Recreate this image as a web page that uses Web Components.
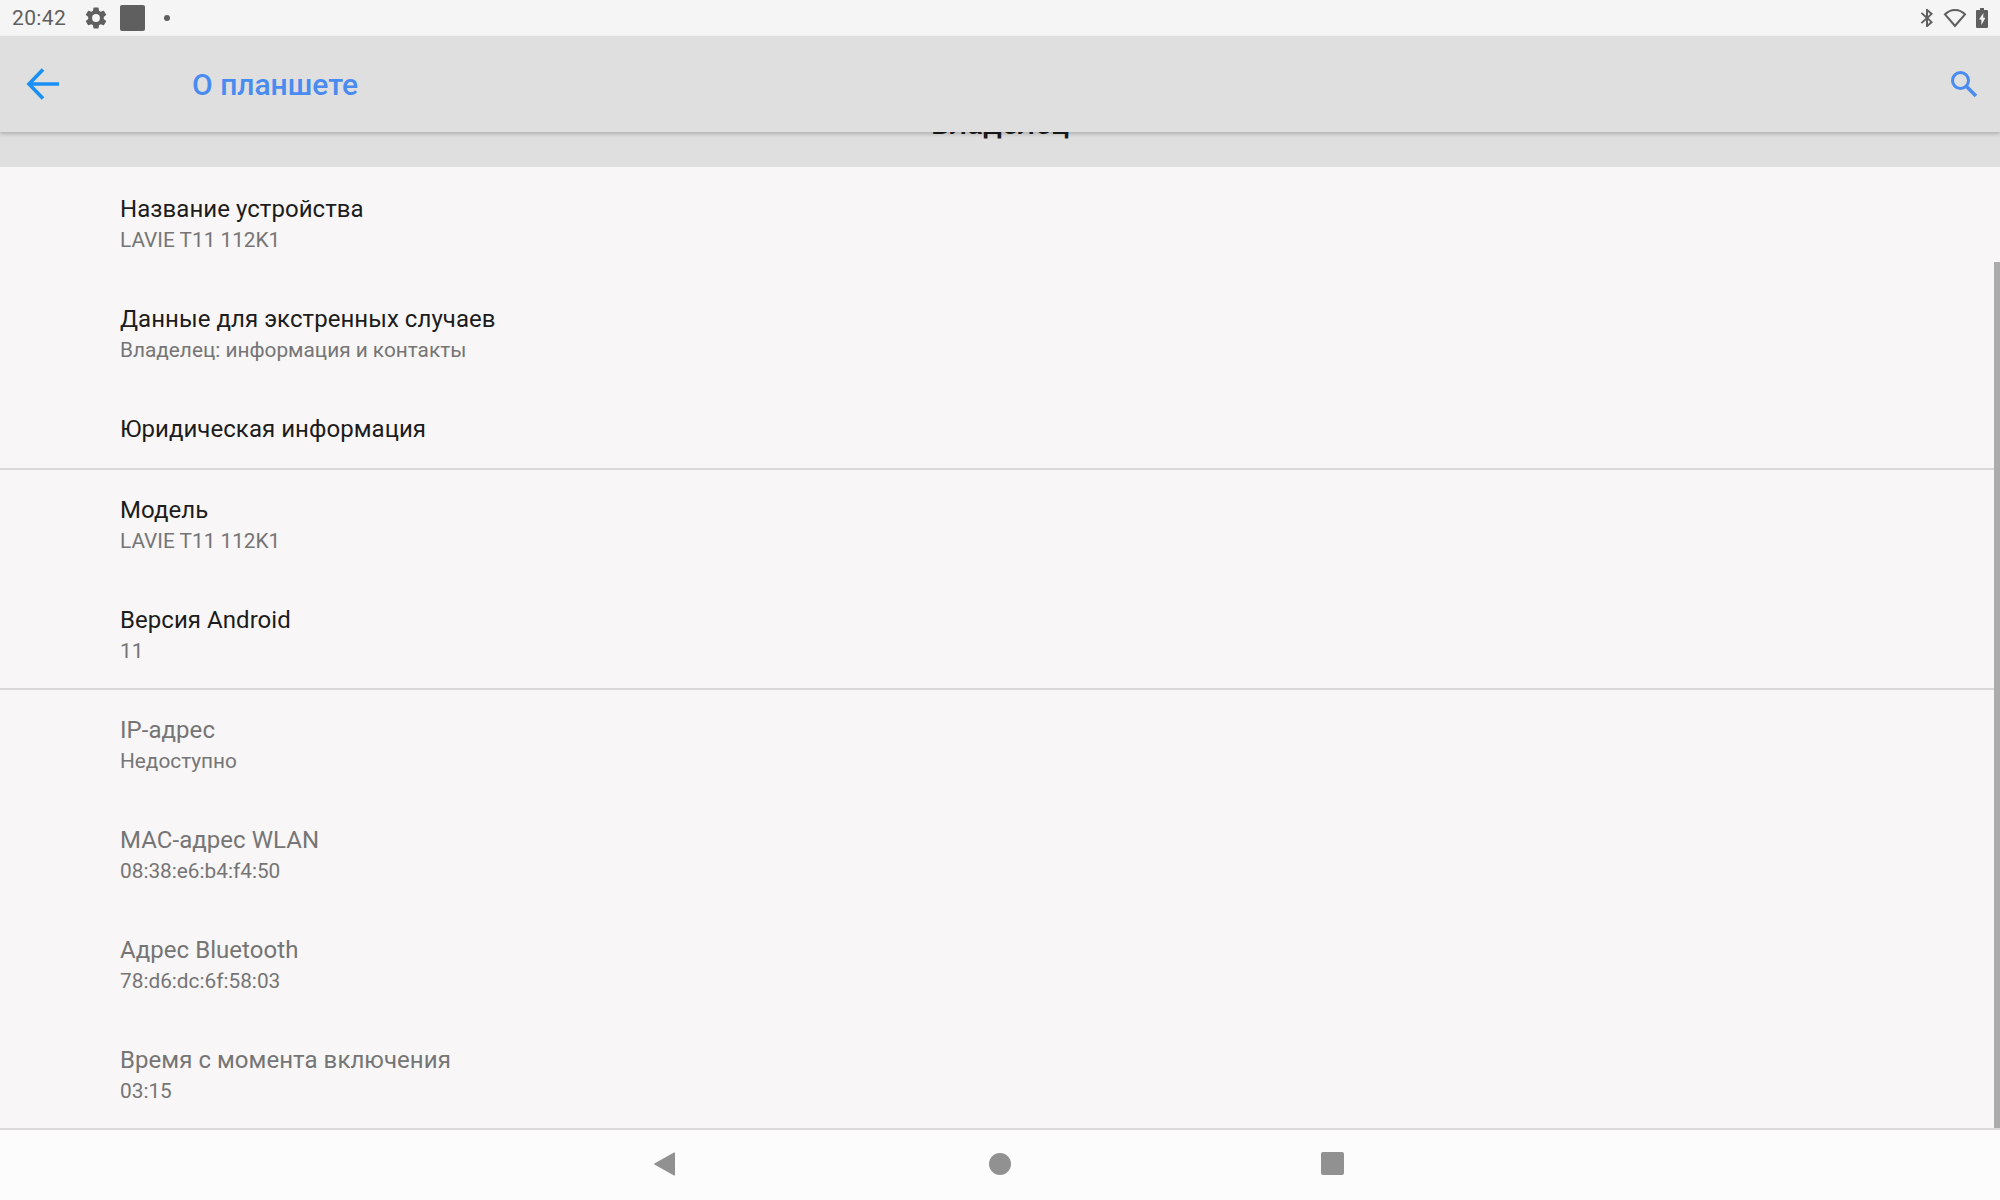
<!DOCTYPE html>
<html lang="ru">
<head>
<meta charset="utf-8">
<title>О планшете</title>
<style>
  html, body { margin: 0; height: 100%; }
  body { font-family: Roboto, "Noto Sans", sans-serif; background: #f8f6f7; overflow: hidden; }
  tablet-screen { height: 1200px; }
</style>
</head>
<body>
<template id="status-bar-template">
  <style>
    :host { display: flex; align-items: center; height: 36px; background: #f5f5f5; color: #5f5f5f; padding: 0 12px; flex: none; }
    .time { font-size: 21px; width: 70.5px; letter-spacing: .35px; }
    .left { display: flex; align-items: center; flex: 1; }
    .square { width: 25px; height: 26px; border-radius: 2px; background: #5f5f5f; margin-left: 11.5px; }
    .dot { width: 6px; height: 6px; border-radius: 50%; background: #5f5f5f; margin-left: 19px; }
    svg { display: block; fill: #5f5f5f; }
    .right { display: flex; align-items: center; gap: 9px; }
  </style>
  <div class="left">
    <span class="time">20:42</span>
    <svg width="26" height="26" viewBox="0 0 24 24"><path d="M19.14 12.94c.04-.3.06-.61.06-.94 0-.32-.02-.64-.07-.94l2.03-1.58a.49.49 0 0 0 .12-.61l-1.92-3.32a.49.49 0 0 0-.59-.22l-2.39.96c-.5-.38-1.03-.7-1.62-.94l-.36-2.54a.48.48 0 0 0-.48-.41h-3.84a.47.47 0 0 0-.47.41l-.36 2.54c-.59.24-1.13.57-1.62.94l-2.39-.96a.49.49 0 0 0-.59.22L2.74 8.87a.48.48 0 0 0 .12.61l2.03 1.58c-.05.3-.09.63-.09.94s.02.64.07.94l-2.03 1.58a.49.49 0 0 0-.12.61l1.92 3.32c.12.22.37.29.59.22l2.39-.96c.5.38 1.03.7 1.62.94l.36 2.54c.05.24.24.41.48.41h3.84c.24 0 .44-.17.47-.41l.36-2.54c.59-.24 1.13-.56 1.62-.94l2.39.96c.22.08.47 0 .59-.22l1.92-3.32a.48.48 0 0 0-.12-.61l-2.01-1.58zM12 15.6A3.6 3.6 0 1 1 12 8.4a3.6 3.6 0 0 1 0 7.2z"/></svg>
    <span class="square"></span>
    <span class="dot"></span>
  </div>
  <div class="right">
    <svg width="14" height="20" viewBox="0 0 14 22" preserveAspectRatio="none"><path d="M6 1h1.4l5.6 5.4L8.600 11 13 15.600 7.400 21H6v-7.600L2 17.200.8 16 5.600 11 .8 6 2 4.800l4 3.800V1zm2 3.400v4.400l2.200-2.200L8 4.400zm0 8.800v4.400l2.200-2.200L8 13.200z"/></svg>
    <svg width="24" height="20" viewBox="0 0 24 20"><path d="M12 19.500.6 6.200C3.600 3 7.600 1 12 1s8.400 2 11.400 5.200L12 19.500zM3.400 6.400 12 16.300l8.600-9.900C18.200 4.200 15.300 3 12 3S5.800 4.200 3.400 6.400z"/></svg>
    <svg width="12" height="20" viewBox="0 0 12 20"><path fill-rule="evenodd" d="M4 0h4v2h3a1 1 0 0 1 1 1v16a1 1 0 0 1-1 1H1a1 1 0 0 1-1-1V3a1 1 0 0 1 1-1h3V0zm3.400 5L3 11.500h2.400V17L9.400 9.800H7.200L7.400 5z"/></svg>
  </div>
</template>

<template id="app-bar-template">
  <style>
    :host { display: flex; align-items: center; justify-content: space-between; height: 96px; background: #dfdfdf; padding: 0 20px 0 25px; flex: none; position: relative; z-index: 1; box-shadow: 0 2px 4px rgba(0,0,0,.22); }
    .start { display: flex; align-items: center; }
    svg { display: block; }
    .title { font-size: 30px; font-weight: 500; color: #4a8bef; margin-left: 133px; }
  </style>
  <div class="start">
    <svg width="34" height="34" viewBox="0 0 34 34"><path d="M34 17H5M18 2.500 4 17l14 14.500" fill="none" stroke="#1a90f5" stroke-width="3.600"/></svg>
    <span class="title"><slot></slot></span>
  </div>
  <svg width="32" height="32" viewBox="0 0 32 32"><circle cx="12.500" cy="12.500" r="8" fill="none" stroke="#4a8bef" stroke-width="3"/><path d="M18.500 18.500 28 28" stroke="#4a8bef" stroke-width="3.500"/></svg>
</template>

<template id="clipped-header-template">
  <style>
    :host { display: block; height: 35px; background: #dfdfdf; overflow: hidden; text-align: center; flex: none; }
    span { display: block; font-size: 30px; font-weight: 500; line-height: 32px; margin-top: -24px; color: #1b1b1b; }
  </style>
  <span><slot></slot></span>
</template>

<template id="pref-group-template">
  <style>
    /* divider sits over the next group, it takes no height of its own */
    :host { display: block; border-bottom: 2px solid #d9d7d8; margin-bottom: -2px; }
    :host([last]) { border-bottom: 0; margin-bottom: 0; }
  </style>
  <slot></slot>
</template>

<template id="pref-row-template">
  <style>
    :host { display: flex; flex-direction: column; justify-content: center; height: 110px; padding: 4px 0 0 120px; box-sizing: border-box; color: #1c1c1c; }
    :host([single]) { height: 81px; padding-top: 2px; }
    :host([disabled]) { color: #757575; }
    .title { font-size: 24px; line-height: 32px; letter-spacing: .05px; }
    .sub { font-size: 20.8px; line-height: 30px; color: #757575; }
  </style>
  <div class="title"><slot></slot></div>
  <div class="sub"><slot name="sub"></slot></div>
</template>

<template id="nav-bar-template">
  <style>
    :host { display: flex; align-items: center; justify-content: center; gap: 310px; height: 72px; padding-bottom: 2px; background: #fcfcfc; border-top: 2px solid #dcdadb; flex: none; box-sizing: border-box; }
    svg { display: block; fill: #919191; }
    .recents { margin: 0 1.500px 0 -1.500px; }
  </style>
  <svg width="24" height="24" viewBox="0 0 24 24"><path d="M21 1v22a.6.6 0 0 1-1 .4L.4 12.600a.8.8 0 0 1 0-1.200L20 .6a.6.6 0 0 1 1 .4z"/></svg>
  <svg width="24" height="24" viewBox="0 0 24 24"><circle cx="12" cy="12" r="11"/></svg>
  <svg class="recents" width="24" height="24" viewBox="0 0 24 24"><rect x="0" y="0" width="23" height="23" rx="2"/></svg>
</template>

<template id="tablet-screen-template">
  <style>
    :host { display: flex; flex-direction: column; position: relative; background: #f8f6f7; }
    .list { flex: 1; overflow: hidden; position: relative; }
    .scrollbar { position: absolute; right: 0; top: 130px; bottom: 0; width: 6px; background: #ababab; }
  </style>
  <slot name="status"></slot>
  <slot name="bar"></slot>
  <div class="list">
    <slot></slot>
    <div class="scrollbar"></div>
  </div>
  <slot name="nav"></slot>
</template>

<tablet-screen>
  <status-bar slot="status"></status-bar>
  <app-bar slot="bar">О планшете</app-bar>
  <clipped-header>Владелец</clipped-header>
  <pref-group>
    <pref-row>Название устройства<span slot="sub">LAVIE T11 112K1</span></pref-row>
    <pref-row>Данные для экстренных случаев<span slot="sub">Владелец: информация и контакты</span></pref-row>
    <pref-row single>Юридическая информация</pref-row>
  </pref-group>
  <pref-group>
    <pref-row>Модель<span slot="sub">LAVIE T11 112K1</span></pref-row>
    <pref-row>Версия Android<span slot="sub">11</span></pref-row>
  </pref-group>
  <pref-group last>
    <pref-row disabled>IP-адрес<span slot="sub">Недоступно</span></pref-row>
    <pref-row disabled>MAC-адрес WLAN<span slot="sub">08:38:e6:b4:f4:50</span></pref-row>
    <pref-row disabled>Адрес Bluetooth<span slot="sub">78:d6:dc:6f:58:03</span></pref-row>
    <pref-row disabled>Время с момента включения<span slot="sub">03:15</span></pref-row>
  </pref-group>
  <nav-bar slot="nav"></nav-bar>
</tablet-screen>

<script>
  // every element is the same: open shadow root cloned from its template
  function register(name) {
    const template = document.getElementById(name + '-template');
    customElements.define(name, class extends HTMLElement {
      constructor() {
        super();
        this.attachShadow({ mode: 'open' });
        this.shadowRoot.appendChild(template.content.cloneNode(true));
      }
    });
  }
  ['status-bar', 'app-bar', 'clipped-header', 'pref-group', 'pref-row', 'nav-bar', 'tablet-screen'].forEach(register);
</script>
</body>
</html>
